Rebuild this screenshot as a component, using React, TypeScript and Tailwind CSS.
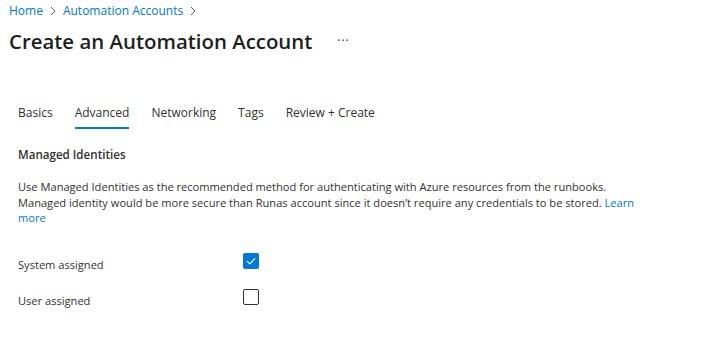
import React from "react";

const font = { fontFamily: '"Open Sans", "Noto Sans", sans-serif' };

function Checkbox({ checked }: { checked: boolean }) {
  return checked ? (
    <div className="w-[16px] h-[16px] rounded-[2px] bg-[#0078d4] flex items-center justify-center">
      <svg width="12" height="12" viewBox="0 0 12 12" fill="none">
        <path d="M2.2 6.3 L4.8 8.8 L9.8 3.6" stroke="white" strokeWidth="1.1" strokeLinecap="round" strokeLinejoin="round" />
      </svg>
    </div>
  ) : (
    <div className="w-[16px] h-[16px] rounded-[2px] border border-[#323130] bg-white" />
  );
}

export default function App() {
  const tabs = ["Basics", "Advanced", "Networking", "Tags", "Review + Create"];
  return (
    <div className="w-[715px] h-[339px] bg-white text-[#323130]" style={font}>
      <div className="pl-[9px] pt-[2px] flex items-center text-[12px] leading-[18px] text-[#0078d4]">
        <span>Home</span>
        <svg className="mx-[6px]" width="8" height="10" viewBox="0 0 8 10"><path d="M2 1 L6 5 L2 9" stroke="#605e5c" strokeWidth="1" fill="none" /></svg>
        <span>Automation Accounts</span>
        <svg className="mx-[6px]" width="8" height="10" viewBox="0 0 8 10"><path d="M2 1 L6 5 L2 9" stroke="#605e5c" strokeWidth="1" fill="none" /></svg>
      </div>
      <div className="pl-[9px] mt-[6px] flex items-center">
        <h1 className="text-[20.4px] leading-[30px] font-semibold text-[#201f1e]">Create an Automation Account</h1>
        <span className="ml-[25px] text-[12px] text-[#323130] tracking-[1px]">···</span>
      </div>
      <div className="pl-[18px] mt-[48px] flex gap-[22px] text-[12px] leading-[18px]">
        {tabs.map((t) => (
          <div key={t} className="flex flex-col">
            <span>{t}</span>
            <div className={"mt-[5px] h-[2px] " + (t === "Advanced" ? "bg-[#0078d4]" : "bg-transparent")} />
          </div>
        ))}
      </div>
      <div className="pl-[18px] mt-[17px] text-[11.6px] leading-[18px] font-semibold">Managed Identities</div>
      <p className="pl-[18px] w-[645px] mt-[15px] text-[11.1px] leading-[15.5px]">
        Use Managed Identities as the recommended method for authenticating with Azure resources from the runbooks.
        Managed identity would be more secure than Runas account since it doesn’t require any credentials to be stored.{" "}
        <span className="text-[#0078d4]">Learn more</span>
      </p>
      <div className="pl-[18px] mt-[26px] flex items-center text-[11.1px] leading-[18px]">
        <span className="w-[225px] mt-[4px]">System assigned</span>
        <div className="-mt-[4px]"><Checkbox checked /></div>
      </div>
      <div className="pl-[18px] mt-[14px] flex items-center text-[11.1px] leading-[18px]">
        <span className="w-[225px] mt-[4px]">User assigned</span>
        <div className="-mt-[4px]"><Checkbox checked={false} /></div>
      </div>
    </div>
  );
}
